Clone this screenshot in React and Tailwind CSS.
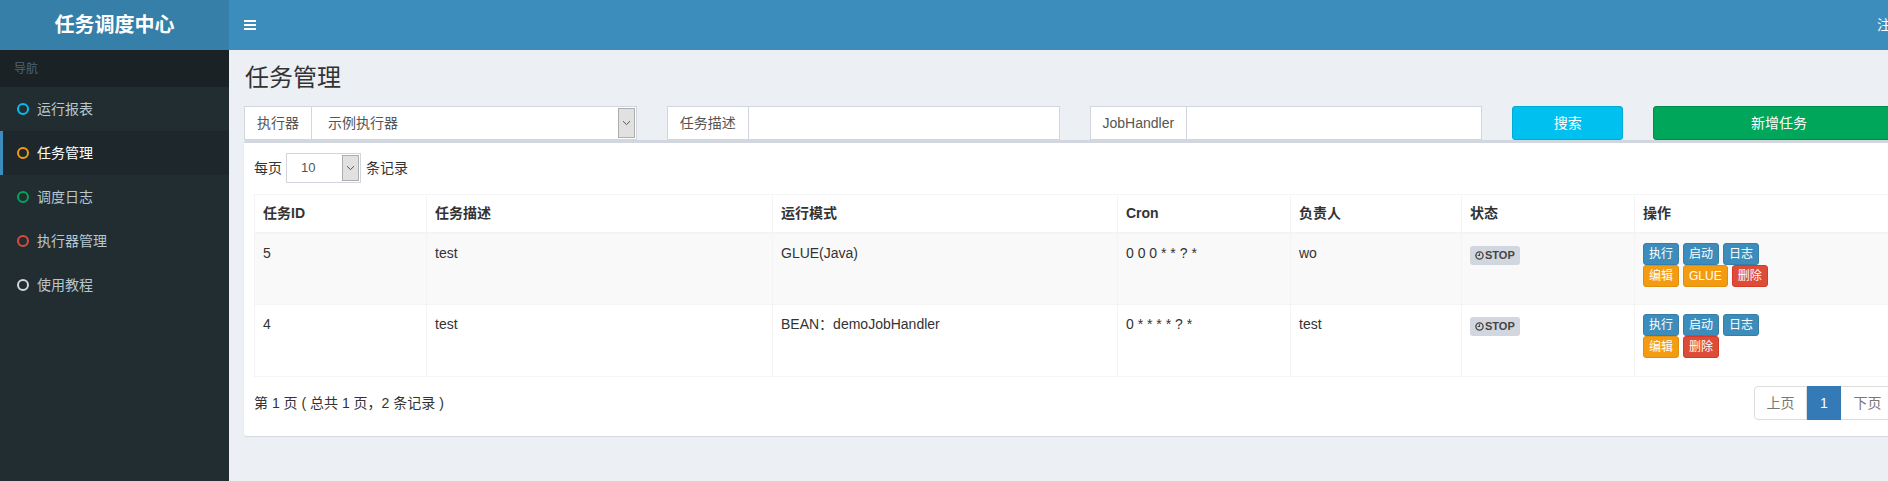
import React from "react";

const menu = [
  { label: "运行报表", color: "border-[#00c0ef]" },
  { label: "任务管理", color: "border-[#f39c12]", active: true },
  { label: "调度日志", color: "border-[#00a65a]" },
  { label: "执行器管理", color: "border-[#dd4b39]" },
  { label: "使用教程", color: "border-[#d2d6de]" },
];

const rows = [
  { id: "5", desc: "test", mode: "GLUE(Java)", cron: "0 0 0 * * ? *", owner: "wo", glue: true, bg: "bg-[#f9f9f9]", h: "h-[72px]" },
  { id: "4", desc: "test", mode: "BEAN：demoJobHandler", cron: "0 * * * * ? *", owner: "test", glue: false, bg: "bg-white", h: "h-[72px]" },
];

const cols = ["w-[172px]", "w-[346px]", "w-[345px]", "w-[173px]", "w-[171px]", "w-[173px]", "w-[261px]"];
const heads = ["任务ID", "任务描述", "运行模式", "Cron", "负责人", "状态", "操作"];

function Chevron() {
  return (
    <svg width="9" height="6" viewBox="0 0 9 6" fill="none">
      <path d="M1 1.2 L4.5 4.6 L8 1.2" stroke="#555" strokeWidth="1" />
    </svg>
  );
}

function Btn({ children, kind }) {
  const c =
    kind === "primary"
      ? "bg-[#3c8dbc] border-[#367fa9]"
      : kind === "warning"
      ? "bg-[#f39c12] border-[#e08e0b]"
      : "bg-[#dd4b39] border-[#d73925]";
  return (
    <span className={`inline-flex items-center justify-center h-[22px] px-[5px] border rounded-[3px] text-white text-[12px] leading-[18px] ${c}`}>
      {children}
    </span>
  );
}

function InputGroup({ label, children }) {
  return (
    <div className="flex h-[34px] border border-[#d2d6de] bg-white">
      <div className="flex items-center px-[12px] border-r border-[#d2d6de] text-[14px] text-[#555] whitespace-nowrap">{label}</div>
      <div className="flex-1 flex items-center">{children}</div>
    </div>
  );
}

export default function App() {
  return (
    <div className="w-[1888px] h-[481px] overflow-hidden bg-[#ecf0f5] font-['Liberation_Sans','Noto_Sans_CJK_SC',sans-serif] text-[#333]">
      <div className="flex w-[1920px] h-[481px]">
        {/* Sidebar */}
        <div className="w-[229px] shrink-0 flex flex-col bg-[#222d32]">
          <div className="h-[50px] bg-[#367fa9] flex items-center justify-center text-white text-[20px] font-bold">任务调度中心</div>
          <div className="h-[37px] bg-[#1a2226] flex items-center pl-[14px] text-[12px] text-[#4b646f]">导航</div>
          {menu.map((m) => (
            <div
              key={m.label}
              className={
                m.active
                  ? "h-[44px] flex items-center pl-[14px] text-[14px] bg-[#1e282c] text-white border-l-[3px] border-[#3c8dbc]"
                  : "h-[44px] flex items-center pl-[17px] text-[14px] text-[#b8c7ce]"
              }
            >
              <span className={`w-[12px] h-[12px] rounded-full border-[2.5px] ${m.color} mr-[8px]`} />
              {m.label}
            </div>
          ))}
        </div>

        {/* Main */}
        <div className="w-[1691px] shrink-0 flex flex-col">
          <div className="h-[50px] bg-[#3c8dbc] flex items-center justify-between pl-[15px] pr-[15px] text-white">
            <svg width="12" height="10" viewBox="0 0 12 10">
              <rect x="0" y="0" width="12" height="2" fill="white" />
              <rect x="0" y="4" width="12" height="2" fill="white" />
              <rect x="0" y="8" width="12" height="2" fill="white" />
            </svg>
            <span className="text-[14px]">注销</span>
          </div>

          <div className="px-[15px] pt-[15px]">
            <h1 className="text-[24px] leading-[26px] text-[#333] pl-[1px]">任务管理</h1>
          </div>

          <div className="px-[15px] pt-[15px]">
            <div className="grid grid-cols-12 gap-x-[30px]">
              <div className="col-span-3">
                <InputGroup label="执行器">
                  <div className="flex-1 h-full flex items-center justify-between pl-[16px] pr-[1px] text-[14px] text-[#555]">
                    <span>示例执行器</span>
                    <span className="w-[17px] h-[30px] bg-[#e1e1e1] border border-[#adadad] flex items-center justify-center">
                      <Chevron />
                    </span>
                  </div>
                </InputGroup>
              </div>
              <div className="col-span-3">
                <InputGroup label="任务描述" />
              </div>
              <div className="col-span-3">
                <InputGroup label="JobHandler" />
              </div>
              <div className="col-span-1">
                <div className="h-[34px] rounded-[3px] bg-[#00c0ef] border border-[#00acd6] flex items-center justify-center text-white text-[14px]">搜索</div>
              </div>
              <div className="col-span-2">
                <div className="h-[34px] rounded-[3px] bg-[#00a65a] border border-[#008d4c] flex items-center justify-center text-white text-[14px]">新增任务</div>
              </div>
            </div>

            {/* Box */}
            <div className="bg-white border-t-[3px] border-[#d2d6de] rounded-[3px] shadow-[0_1px_1px_rgba(0,0,0,0.1)] px-[10px] pt-[10px] pb-[16px]">
              <div className="flex items-center h-[30px] text-[14px] text-[#333]">
                <span>每页</span>
                <div className="ml-[4px] w-[75px] h-[30px] border border-[#d2d6de] flex items-center justify-between pr-[1px]">
                  <span className="pl-[14px] text-[13px] text-[#555]">10</span>
                  <span className="w-[17px] h-[26px] bg-[#e1e1e1] border border-[#adadad] flex items-center justify-center">
                    <Chevron />
                  </span>
                </div>
                <span className="ml-[5px]">条记录</span>
              </div>

              <table className="mt-[11px] border-collapse border border-[#f4f4f4] text-[14px] text-[#333] table-fixed w-[1641px]">
                <thead>
                  <tr className="h-[38px]">
                    {heads.map((h, i) => (
                      <th key={h} className={`${cols[i]} border border-[#f4f4f4] border-b-2 text-left font-bold px-[8px] align-middle`}>
                        {h}
                      </th>
                    ))}
                  </tr>
                </thead>
                <tbody>
                  {rows.map((r) => (
                    <tr key={r.id} className={`${r.bg} ${r.h}`}>
                      <td className="border border-[#f4f4f4] px-[8px] pt-[9px] align-top">{r.id}</td>
                      <td className="border border-[#f4f4f4] px-[8px] pt-[9px] align-top">{r.desc}</td>
                      <td className="border border-[#f4f4f4] px-[8px] pt-[9px] align-top">{r.mode}</td>
                      <td className="border border-[#f4f4f4] px-[8px] pt-[9px] align-top">{r.cron}</td>
                      <td className="border border-[#f4f4f4] px-[8px] pt-[9px] align-top">{r.owner}</td>
                      <td className="border border-[#f4f4f4] px-[8px] pt-[11px] align-top">
                        <span className="inline-flex items-center h-[19px] px-[5px] rounded-[3px] bg-[#d2d6de] text-[#444] text-[11px] font-bold">
                          <svg width="9" height="9" viewBox="0 0 10 10" className="mr-[1px]">
                            <circle cx="5" cy="5" r="4" fill="none" stroke="#444" strokeWidth="1.5" />
                            <path d="M5 2.6 V5 H3" fill="none" stroke="#444" strokeWidth="1.3" />
                          </svg>
                          STOP
                        </span>
                      </td>
                      <td className="border border-[#f4f4f4] px-[8px] pt-[9px] align-top">
                        <div className="flex gap-[4px]">
                          <Btn kind="primary">执行</Btn>
                          <Btn kind="primary">启动</Btn>
                          <Btn kind="primary">日志</Btn>
                        </div>
                        <div className="flex gap-[4px]">
                          <Btn kind="warning">编辑</Btn>
                          {r.glue && <Btn kind="warning">GLUE</Btn>}
                          <Btn kind="danger">删除</Btn>
                        </div>
                      </td>
                    </tr>
                  ))}
                </tbody>
              </table>

              <div className="flex items-center justify-between mt-[9px] w-[1641px]">
                <span className="text-[14px] text-[#333]">第 1 页 ( 总共 1 页，2 条记录 )</span>
                <div className="flex h-[34px] text-[14px]">
                  <span className="w-[53px] flex items-center justify-center border border-[#ddd] rounded-l-[4px] text-[#777] bg-white">上页</span>
                  <span className="w-[34px] flex items-center justify-center bg-[#337ab7] border border-[#337ab7] text-white">1</span>
                  <span className="w-[54px] flex items-center justify-center border border-[#ddd] border-l-0 rounded-r-[4px] text-[#777] bg-white">下页</span>
                </div>
              </div>
            </div>
          </div>
        </div>
      </div>
    </div>
  );
}
